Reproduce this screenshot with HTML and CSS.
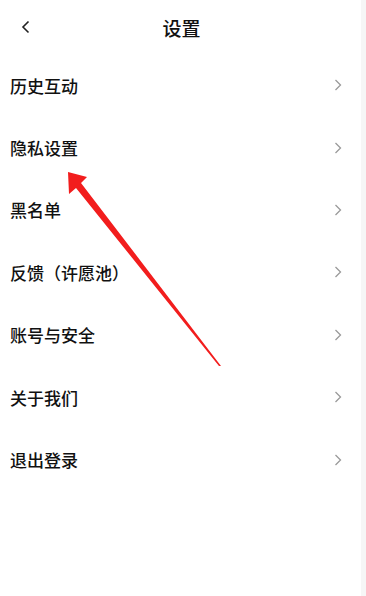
FILE: index.html
```html
<!DOCTYPE html>
<html lang="zh">
<head>
<meta charset="utf-8">
<link rel="stylesheet" href="styles.css">
</head>
<body>
<div class="page">
  <div class="main">
    <header class="nav">
      <span class="back"><svg width="12" height="14" viewBox="0 0 12 14"><path d="M8.5 1.5 L3 7 L8.5 12.5" fill="none" stroke="#222" stroke-width="1.6"/></svg></span>
      <h1 class="title">设置</h1>
    </header>
    <ul class="list">
      <li class="row"><span>历史互动</span><svg class="chev" width="10" height="14" viewBox="0 0 10 14"><path d="M2.5 2 L7.5 7 L2.5 12" fill="none" stroke="#9a9a9a" stroke-width="1.3"/></svg></li>
      <li class="row"><span>隐私设置</span><svg class="chev" width="10" height="14" viewBox="0 0 10 14"><path d="M2.5 2 L7.5 7 L2.5 12" fill="none" stroke="#9a9a9a" stroke-width="1.3"/></svg></li>
      <li class="row"><span>黑名单</span><svg class="chev" width="10" height="14" viewBox="0 0 10 14"><path d="M2.5 2 L7.5 7 L2.5 12" fill="none" stroke="#9a9a9a" stroke-width="1.3"/></svg></li>
      <li class="row"><span>反馈（许愿池）</span><svg class="chev" width="10" height="14" viewBox="0 0 10 14"><path d="M2.5 2 L7.5 7 L2.5 12" fill="none" stroke="#9a9a9a" stroke-width="1.3"/></svg></li>
      <li class="row"><span>账号与安全</span><svg class="chev" width="10" height="14" viewBox="0 0 10 14"><path d="M2.5 2 L7.5 7 L2.5 12" fill="none" stroke="#9a9a9a" stroke-width="1.3"/></svg></li>
      <li class="row"><span>关于我们</span><svg class="chev" width="10" height="14" viewBox="0 0 10 14"><path d="M2.5 2 L7.5 7 L2.5 12" fill="none" stroke="#9a9a9a" stroke-width="1.3"/></svg></li>
      <li class="row"><span>退出登录</span><svg class="chev" width="10" height="14" viewBox="0 0 10 14"><path d="M2.5 2 L7.5 7 L2.5 12" fill="none" stroke="#9a9a9a" stroke-width="1.3"/></svg></li>
    </ul>
  </div>
  <div class="edge"></div>
  <svg class="arrow" width="366" height="596" viewBox="0 0 366 596">
    <path d="M68 172 L87 177 L81 183 L221 366 L219 366 L76 188 L69 194 Z" fill="#f21d1d"/>
  </svg>
</div>
</body>
</html>
```
FILE: styles.css
```css
* { box-sizing: border-box; }
html, body { margin: 0; padding: 0; background: #fff; }
body {
  font-family: "Noto Sans CJK SC", "Noto Sans", sans-serif;
  color: #111;
}
.page {
  position: relative;
  width: 366px;
  height: 596px;
  display: flex;
  overflow: hidden;
}
.main { flex: 1; }
.edge { width: 5px; background: #f6f6f6; }
.nav {
  height: 55px;
  position: relative;
  display: flex;
  align-items: center;
  justify-content: center;
  padding-bottom: 1px;
}
.back {
  position: absolute;
  left: 20px;
  top: 20px;
  display: flex;
}
.title {
  margin: 0 0 0 2px;
  font-size: 19px;
  font-weight: 500;
  line-height: 1;
  color: #111;
}
.list {
  list-style: none;
  margin: 0;
  padding: 0;
}
.row {
  height: 62.4px;
  display: flex;
  align-items: center;
  justify-content: space-between;
  padding: 0 18px 2px 10px;
  font-size: 17px;
  font-weight: 500;
  line-height: 1;
}
.chev { display: block; }
.arrow {
  position: absolute;
  left: 0;
  top: 0;
  pointer-events: none;
}
```
